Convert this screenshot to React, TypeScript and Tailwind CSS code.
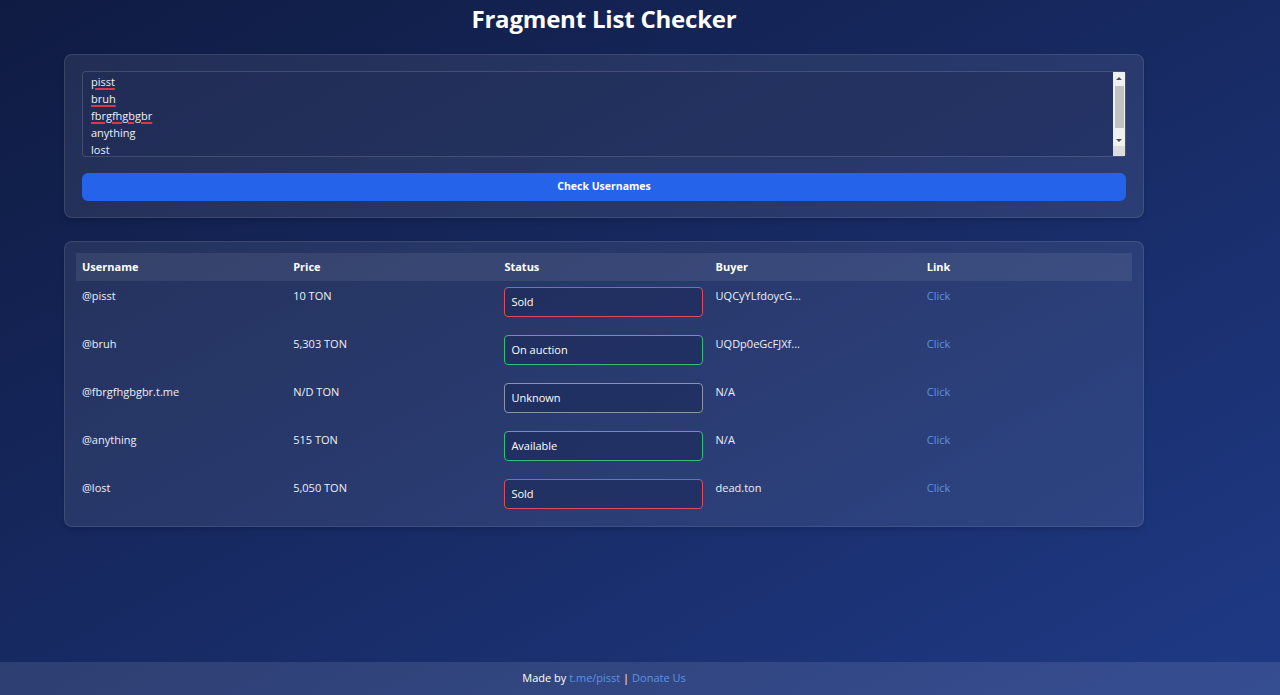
import React from "react";

type Row = {
  username: string;
  price: string;
  status: "Sold" | "On auction" | "Unknown" | "Available";
  buyer: string;
};

const rows: Row[] = [
  { username: "@pisst", price: "10 TON", status: "Sold", buyer: "UQCyYLfdoycG..." },
  { username: "@bruh", price: "5,303 TON", status: "On auction", buyer: "UQDp0eGcFJXf..." },
  { username: "@fbrgfhgbgbr.t.me", price: "N/D TON", status: "Unknown", buyer: "N/A" },
  { username: "@anything", price: "515 TON", status: "Available", buyer: "N/A" },
  { username: "@lost", price: "5,050 TON", status: "Sold", buyer: "dead.ton" },
];

const statusBorder: Record<Row["status"], string> = {
  Sold: "border-[#e04a5c]",
  "On auction": "border-[#2fbf78]",
  Unknown: "border-[#8b93a8]",
  Available: "border-[#2fbf78]",
};

const lines = [
  { text: "pisst", typo: true },
  { text: "bruh", typo: true },
  { text: "fbrgfhgbgbr", typo: true },
  { text: "anything", typo: false },
  { text: "lost", typo: false },
];

const App = () => {
  return (
    <div
      className="min-h-[695px] flex flex-col bg-gradient-to-br from-[#0f1b42] via-[#172a63] to-[#1f3a86] text-white"
      style={{ fontFamily: '"Open Sans", "Noto Sans", sans-serif' }}
    >
      <div className="w-[1208px] flex flex-col items-center flex-1">
        <h1 className="text-[24px] leading-[32px] font-bold mt-[3px] tracking-[-0.2px]">
          Fragment List Checker
        </h1>

        <div className="w-[1080px] mt-[19px] rounded-lg border border-white/10 bg-white/[0.08] px-[17px] pt-[16px] pb-[16px] shadow-md">
          <div className="relative h-[86px] rounded-[4px] border border-white/15 bg-[#1d2a55]/40 pl-[8px] pt-[1px] text-[11px] leading-[17px] text-[#eef0f6]">
            {lines.map((l) => (
              <div key={l.text}>
                <span
                  className={
                    l.typo
                      ? "underline decoration-[#d43a4a] decoration-[1.5px] underline-offset-[2px]"
                      : ""
                  }
                >
                  {l.text}
                </span>
              </div>
            ))}
            <div className="absolute right-0 top-0 bottom-0 w-[12px] bg-[#f0f0f0] flex flex-col items-center">
              <div className="h-[12px] flex items-center justify-center">
                <div className="w-0 h-0 border-l-[3px] border-r-[3px] border-b-[3px] border-l-transparent border-r-transparent border-b-[#505050]" />
              </div>
              <div className="w-[9px] h-[42px] bg-[#c1c1c1] mt-[2px]" />
              <div className="h-[12px] mt-[6px] flex items-center justify-center">
                <div className="w-0 h-0 border-l-[3px] border-r-[3px] border-t-[3px] border-l-transparent border-r-transparent border-t-[#505050]" />
              </div>
              <div className="flex-1 w-full bg-[#dcdcdc]" />
            </div>
          </div>
          <button className="mt-[16px] w-full h-[28px] rounded-md bg-[#2563eb] text-[10.5px] font-bold text-white">
            Check Usernames
          </button>
        </div>

        <div className="w-[1080px] mt-[23px] rounded-lg border border-white/10 bg-white/[0.08] px-[11px] pt-[11px] pb-[5px] shadow-md">
          <table className="w-full table-fixed text-[11px] text-[#eef0f6]">
            <thead>
              <tr className="bg-white/[0.08] h-[28px] text-left text-white">
                <th className="px-[6px] pt-[1px] font-bold">Username</th>
                <th className="px-[6px] pt-[1px] font-bold">Price</th>
                <th className="px-[6px] pt-[1px] font-bold">Status</th>
                <th className="px-[6px] pt-[1px] font-bold">Buyer</th>
                <th className="px-[6px] pt-[1px] font-bold">Link</th>
              </tr>
            </thead>
            <tbody>
              {rows.map((r) => (
                <tr key={r.username} className="align-top">
                  <td className="px-[6px] pt-[6px] h-[48px] leading-[17px]">{r.username}</td>
                  <td className="px-[6px] pt-[6px] leading-[17px]">{r.price}</td>
                  <td className="px-[6px] pt-[6px]">
                    <div
                      className={`h-[30px] w-[199px] rounded-[4px] border-[1.5px] ${statusBorder[r.status]} bg-[#1d2a5a]/60 px-[6px] pb-[1px] flex items-center leading-none text-white`}
                    >
                      {r.status}
                    </div>
                  </td>
                  <td className="px-[6px] pt-[6px] leading-[17px]">{r.buyer}</td>
                  <td className="px-[6px] pt-[6px] leading-[17px]">
                    <a className="text-[#5b93e6]">Click</a>
                  </td>
                </tr>
              ))}
            </tbody>
          </table>
        </div>
      </div>

      <footer className="h-[33px] bg-white/10 flex">
        <div className="w-[1208px] flex items-center justify-center text-[11px]">
          <span>
            Made by <a className="text-[#5b93e6]">t.me/pisst</a> |{" "}
            <a className="text-[#5b93e6]">Donate Us</a>
          </span>
        </div>
      </footer>
    </div>
  );
};

export default App;
